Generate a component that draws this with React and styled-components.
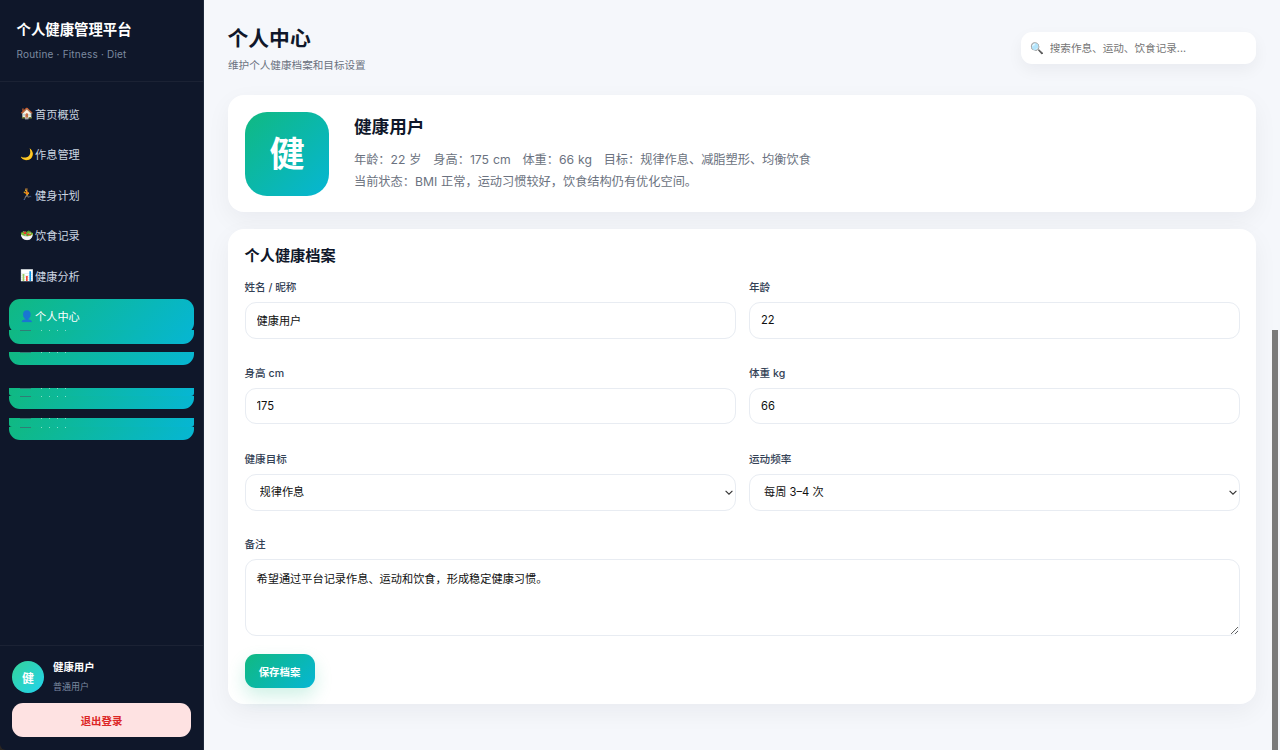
import React from 'react'
import styled, { createGlobalStyle } from 'styled-components'

const GlobalStyle = createGlobalStyle`
    * { box-sizing: border-box; }
    html, body { margin: 0; padding: 0; height: 100%; }
    body {
        font-family: Inter, "Noto Sans CJK SC", "Liberation Sans", sans-serif;
        background: #f5f7fb;
        color: #0f172a;
    }
`

const GRAD = 'linear-gradient(135deg, #10b981, #06b6d4)'

const navItems = [
    { icon: '🏠', label: '首页概览' },
    { icon: '🌙', label: '作息管理' },
    { icon: '🏃', label: '健身计划' },
    { icon: '🥗', label: '饮食记录' },
    { icon: '📊', label: '健康分析' },
    { icon: '👤', label: '个人中心', active: true },
]

const slices = [
    { top: -4, height: 14 },
    { top: 8, height: 13 },
    { top: 23, height: 8, small: true },
    { top: 0, height: 13 },
    { top: 9, height: 9, small: true },
    { top: 0, height: 13 },
]

const Chevron = () => (
    <ChevronSvg viewBox="0 0 8 5">
        <path d="M0.6 0.8 L4 4.2 L7.4 0.8" fill="none" stroke="#333" strokeWidth="1.1" />
    </ChevronSvg>
)

const App = () => {
    return (
        <Page>
            <GlobalStyle />
            <Sidebar>
                <Brand>
                    <BrandTitle>个人健康管理平台</BrandTitle>
                    <BrandSub>Routine · Fitness · Diet</BrandSub>
                </Brand>
                <Nav>
                    {navItems.map((item) => (
                        <NavItem key={item.label} $active={item.active}>
                            <NavIcon>{item.icon}</NavIcon>
                            {item.label}
                        </NavItem>
                    ))}
                    {slices.map((s, i) => (
                        <Slice key={i} $top={s.top} $height={s.height} $small={s.small}>
                            <SliceDash />
                            <SliceDot />
                            <SliceDot />
                            <SliceDot />
                            <SliceDot />
                        </Slice>
                    ))}
                </Nav>
                <SideFooter>
                    <UserRow>
                        <UserAvatar>健</UserAvatar>
                        <div>
                            <UserName>健康用户</UserName>
                            <UserRole>普通用户</UserRole>
                        </div>
                    </UserRow>
                    <LogoutButton>退出登录</LogoutButton>
                </SideFooter>
            </Sidebar>

            <Main>
                <Topbar>
                    <div>
                        <PageTitle>个人中心</PageTitle>
                        <PageSub>维护个人健康档案和目标设置</PageSub>
                    </div>
                    <SearchBox>
                        <SearchIcon>🔍</SearchIcon>
                        <SearchInput placeholder="搜索作息、运动、饮食记录..." />
                    </SearchBox>
                </Topbar>

                <ProfileCard>
                    <BigAvatar>健</BigAvatar>
                    <div>
                        <ProfileName>健康用户</ProfileName>
                        <ProfileLine>年龄：22 岁 &nbsp; 身高：175 cm &nbsp; 体重：66 kg &nbsp; 目标：规律作息、减脂塑形、均衡饮食</ProfileLine>
                        <ProfileLine>当前状态：BMI 正常，运动习惯较好，饮食结构仍有优化空间。</ProfileLine>
                    </div>
                </ProfileCard>

                <FormCard>
                    <FormTitle>个人健康档案</FormTitle>
                    <FormGrid>
                        <Field>
                            <Label>姓名 / 昵称</Label>
                            <Input defaultValue="健康用户" />
                        </Field>
                        <Field>
                            <Label>年龄</Label>
                            <Input defaultValue="22" />
                        </Field>
                        <Field>
                            <Label>身高 cm</Label>
                            <Input defaultValue="175" />
                        </Field>
                        <Field>
                            <Label>体重 kg</Label>
                            <Input defaultValue="66" />
                        </Field>
                        <Field>
                            <Label>健康目标</Label>
                            <SelectWrap>
                                <Select defaultValue="规律作息">
                                    <option>规律作息</option>
                                    <option>减脂塑形</option>
                                    <option>均衡饮食</option>
                                </Select>
                                <Chevron />
                            </SelectWrap>
                        </Field>
                        <Field>
                            <Label>运动频率</Label>
                            <SelectWrap>
                                <Select defaultValue="每周 3–4 次">
                                    <option>每周 1–2 次</option>
                                    <option>每周 3–4 次</option>
                                    <option>每周 5 次以上</option>
                                </Select>
                                <Chevron />
                            </SelectWrap>
                        </Field>
                        <WideField>
                            <Label>备注</Label>
                            <TextArea defaultValue="希望通过平台记录作息、运动和饮食，形成稳定健康习惯。" />
                        </WideField>
                    </FormGrid>
                    <SaveButton>保存档案</SaveButton>
                </FormCard>
                <ScrollThumb />
            </Main>
        </Page>
    )
}

export default App

const Page = styled.div`
    display: flex;
    width: 100%;
    height: 750px;
    overflow: hidden;
    background: #2b2622;
`

const Sidebar = styled.aside`
    width: 204px;
    flex-shrink: 0;
    display: flex;
    flex-direction: column;
    background: #0f172a;
    border-right: 1px solid #1e293b;
    border-bottom-left-radius: 6px;
`

const Brand = styled.div`
    height: 82px;
    padding: 20px 16px 0 16.5px;
    border-bottom: 1px solid rgba(255,255,255,0.05);
`

const BrandTitle = styled.div`
    font-size: 14.4px;
    line-height: 20px;
    font-weight: 700;
    color: #fff;
`

const BrandSub = styled.div`
    margin-top: 7px;
    font-size: 10px;
    line-height: 14px;
    letter-spacing: 0.2px;
    color: #7c8aa0;
`

const Nav = styled.nav`
    flex: 1;
    display: flex;
    flex-direction: column;
    padding: 14px 9px 0 9px;
`

const NavItem = styled.div`
    display: flex;
    align-items: center;
    gap: 3px;
    height: 35px;
    margin-bottom: ${(p) => (p.$active ? '0' : '5.5px')};
    padding-left: 11px;
    border-radius: 11px;
    font-size: 11.2px;
    font-weight: 400;
    color: ${(p) => (p.$active ? '#fff' : '#cbd5e1')};
    background: ${(p) => (p.$active ? GRAD : 'transparent')};
`

const NavIcon = styled.span`
    width: 12px;
    font-size: 11px;
    line-height: 1;
    text-align: center;
    font-family: "Noto Color Emoji", "DejaVu Sans", sans-serif;
`

const Slice = styled.div`
    display: flex;
    align-items: flex-start;
    flex-shrink: 0;
    height: ${(p) => p.$height}px;
    margin-top: ${(p) => p.$top}px;
    padding-left: 11px;
    border-radius: ${(p) => (p.$small ? '0 0 3px 3px' : '0 0 11px 11px')};
    background: ${GRAD};
`

const SliceDash = styled.span`
    width: 11px;
    height: 1px;
    margin-right: 10px;
    background: rgba(71,85,105,0.6);
`

const SliceDot = styled.span`
    width: 1px;
    height: 1px;
    margin-right: 7px;
    background: rgba(255,255,255,0.5);
`

const SideFooter = styled.div`
    height: 105px;
    padding: 15px 13px 0 12px;
    border-top: 1px solid rgba(255,255,255,0.05);
`

const UserRow = styled.div`
    display: flex;
    align-items: center;
    gap: 9px;
`

const UserAvatar = styled.div`
    display: flex;
    align-items: center;
    justify-content: center;
    width: 32px;
    height: 32px;
    border-radius: 50%;
    background: linear-gradient(135deg, #34d399, #22d3ee);
    font-size: 12px;
    font-weight: 700;
    color: #fff;
`

const UserName = styled.div`
    font-size: 10.4px;
    line-height: 13px;
    font-weight: 600;
    color: #fff;
`

const UserRole = styled.div`
    margin-top: 5.5px;
    font-size: 9px;
    line-height: 13px;
    color: #7c8aa0;
`

const LogoutButton = styled.button`
    display: block;
    width: 179px;
    height: 34px;
    margin-top: 10px;
    border: none;
    border-radius: 11px;
    background: #fee2e2;
    font-family: inherit;
    font-size: 10.4px;
    font-weight: 700;
    color: #dc2626;
`

const Main = styled.main`
    position: relative;
    flex: 1;
    min-width: 0;
    display: flex;
    flex-direction: column;
    gap: 17px;
    padding: 24px 24px 0 24px;
    background: #f5f7fb;
`

const Topbar = styled.div`
    display: flex;
    align-items: flex-start;
    justify-content: space-between;
    height: 54px;
`

const PageTitle = styled.h1`
    margin: 1px 0 0 -0.5px;
    font-size: 20.8px;
    line-height: 28px;
    font-weight: 700;
    color: #0f172a;
`

const PageSub = styled.p`
    margin: 6px 0 0;
    font-size: 10.6px;
    line-height: 14px;
    color: #6b7280;
`

const SearchBox = styled.label`
    display: flex;
    align-items: center;
    gap: 4px;
    width: 235px;
    height: 32px;
    margin-top: 8px;
    padding-left: 9px;
    border-radius: 11px;
    background: #fff;
    box-shadow: 0 6px 16px rgba(15,23,42,0.05);
`

const SearchIcon = styled.span`
    font-size: 11px;
    line-height: 1;
    font-family: "Noto Color Emoji", "DejaVu Sans", sans-serif;
`

const SearchInput = styled.input`
    flex: 1;
    min-width: 0;
    border: none;
    outline: none;
    background: transparent;
    font-family: inherit;
    font-size: 10.6px;
    &::placeholder { color: #757575; }
`

const Card = styled.section`
    background: #fff;
    border-radius: 16px;
    box-shadow: 0 8px 24px rgba(15,23,42,0.05);
`

const ProfileCard = styled(Card)`
    display: flex;
    align-items: center;
    gap: 25px;
    height: 117px;
    padding: 0 17px;
`

const BigAvatar = styled.div`
    display: flex;
    align-items: center;
    justify-content: center;
    width: 84px;
    height: 84px;
    padding-bottom: 4px;
    border-radius: 22px;
    background: ${GRAD};
    font-size: 35.2px;
    font-weight: 700;
    color: #fff;
`

const ProfileName = styled.div`
    margin-bottom: 9px;
    font-size: 17.6px;
    line-height: 26px;
    font-weight: 600;
    color: #0f172a;
`

const ProfileLine = styled.div`
    font-size: 12.2px;
    line-height: 22px;
    word-spacing: 0.5px;
    color: #6b7280;
`

const FormCard = styled(Card)`
    height: 475px;
    padding: 16px 16px 0 16.5px;
`

const FormTitle = styled.h2`
    margin: 0 0 14px;
    font-size: 15.2px;
    line-height: 22px;
    font-weight: 600;
    color: #0f172a;
`

const FormGrid = styled.div`
    display: grid;
    grid-template-columns: 1fr 1fr;
    column-gap: 13.5px;
`

const Field = styled.div`
    display: flex;
    flex-direction: column;
    height: 85.8px;
`

const WideField = styled(Field)`
    grid-column: 1 / -1;
    height: 109px;
`

const Label = styled.label`
    margin-bottom: 7px;
    font-size: 10.6px;
    line-height: 14px;
    font-weight: 500;
    color: #334155;
`

const controlStyle = `
    width: 100%;
    border: 1px solid #e8ecf2;
    border-radius: 11px;
    background: #fff;
    outline: none;
    font-family: inherit;
    font-size: 11.2px;
    color: #111;
`

const Input = styled.input`
    ${controlStyle}
    height: 36.5px;
    padding: 0 11px;
`

const SelectWrap = styled.div`
    position: relative;
    height: 37px;
`

const Select = styled.select`
    ${controlStyle}
    height: 37px;
    padding: 0 14px;
    appearance: none;
`

const ChevronSvg = styled.svg`
    position: absolute;
    top: 16px;
    right: 3px;
    width: 8px;
    height: 5px;
    pointer-events: none;
`

const TextArea = styled.textarea`
    ${controlStyle}
    height: 77px;
    padding: 11px 11px;
    line-height: 16px;
`

const SaveButton = styled.button`
    display: block;
    width: 70px;
    height: 34px;
    margin-top: 7px;
    border: none;
    border-radius: 11px;
    background: ${GRAD};
    box-shadow: 0 8px 18px rgba(16,185,129,0.2);
    font-family: inherit;
    font-size: 10.4px;
    font-weight: 700;
    color: #fff;
`

const ScrollThumb = styled.div`
    position: absolute;
    top: 330px;
    right: 2px;
    bottom: 0;
    width: 6px;
    background: #7a7a7a;
`
